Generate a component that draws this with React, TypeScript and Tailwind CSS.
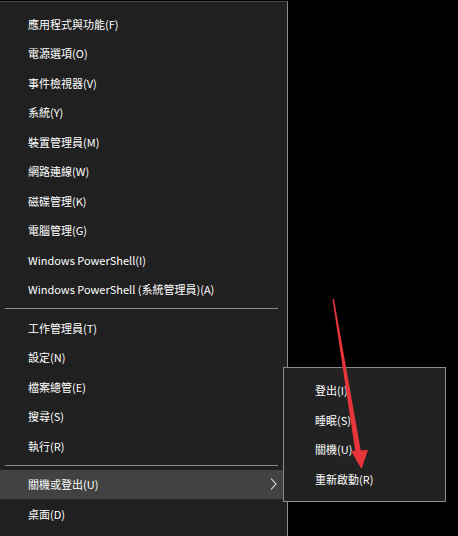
import React from "react";

const font = { fontFamily: '"Segoe UI", "Noto Sans CJK TC", "Noto Sans", sans-serif' };

type Item = { label: string; active?: boolean; sub?: boolean } | "sep";

const items: Item[] = [
  { label: "應用程式與功能(F)" },
  { label: "電源選項(O)" },
  { label: "事件檢視器(V)" },
  { label: "系統(Y)" },
  { label: "裝置管理員(M)" },
  { label: "網路連線(W)" },
  { label: "磁碟管理(K)" },
  { label: "電腦管理(G)" },
  { label: "Windows PowerShell(I)" },
  { label: "Windows PowerShell (系統管理員)(A)" },
  "sep",
  { label: "工作管理員(T)" },
  { label: "設定(N)" },
  { label: "檔案總管(E)" },
  { label: "搜尋(S)" },
  { label: "執行(R)" },
  "sep",
  { label: "關機或登出(U)", active: true, sub: true },
  { label: "桌面(D)" },
];

const subItems = ["登出(I)", "睡眠(S)", "關機(U)", "重新啟動(R)"];

export default function App() {
  return (
    <div className="relative w-[458px] h-[536px] overflow-hidden bg-black text-white" style={font}>
      <div className="pt-[1px]">
        <div className="w-[288px] h-[600px] bg-[#202020] border-t border-r border-[#8a8a8a] border-t-[#4a4a4a] pt-[7px] flex flex-col">
          {items.map((it, i) =>
            it === "sep" ? (
              <div key={i} className="h-[9px] flex items-center pl-[5px] pr-[9px]">
                <div className="h-px w-full bg-[#8a8a8a]" />
              </div>
            ) : (
              <div
                key={i}
                className={`h-[29.5px] shrink-0 flex items-center pl-[28px] pr-[10px] text-[11px] ${
                  it.active ? "bg-[#424242]" : ""
                }`}
              >
                <span className="flex-1 whitespace-nowrap">{it.label}</span>
                {it.sub && (
                  <svg width="7" height="12" viewBox="0 0 7 12">
                    <path d="M1 0.5 L6 6 L1 11.5" fill="none" stroke="#e8e8e8" strokeWidth="1.1" />
                  </svg>
                )}
              </div>
            )
          )}
        </div>
      </div>

      <div className="absolute left-[283px] top-[367px] w-[163px] h-[135px] bg-[#222222] border border-[#8a8a8a] py-[7.5px] flex flex-col">
        {subItems.map((s) => (
          <div key={s} className="h-[29.5px] shrink-0 flex items-center pl-[31px] text-[11px] whitespace-nowrap">
            {s}
          </div>
        ))}
      </div>

      <svg className="absolute left-0 top-0 pointer-events-none" width="458" height="536" viewBox="0 0 458 536">
        <polygon points="332.5,299 334,299 361,452 355.5,453" fill="#e8353b" />
        <polygon points="351,451 368,450 361.5,469" fill="#e8353b" />
      </svg>
    </div>
  );
}
